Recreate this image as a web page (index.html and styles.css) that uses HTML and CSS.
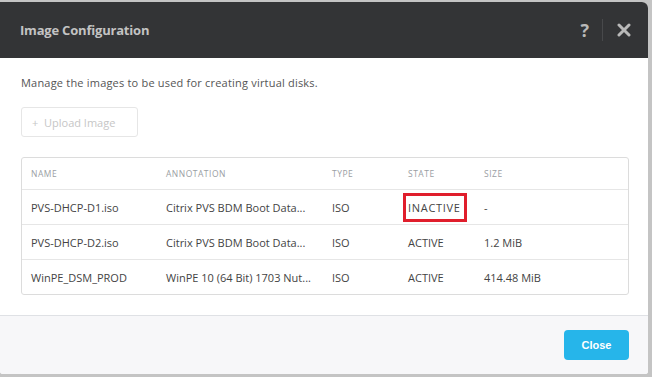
FILE: index.html
```html
<!DOCTYPE html>
<html lang="en">
<head>
    <meta charset="UTF-8">
    <title>Image Configuration</title>
    <link rel="stylesheet" href="styles.css">
</head>
<body>
    <div class="modal">
        <div class="modal-header">
            <h2>Image Configuration</h2>
            <div class="header-actions">
                <span class="help">?</span>
                <span class="divider"></span>
                <span class="close-x">
                    <svg width="14" height="14" viewBox="0 0 14 14">
                        <path d="M2 2 L12 12 M12 2 L2 12" stroke="#b9b9b9" stroke-width="3" stroke-linecap="round"/>
                    </svg>
                </span>
            </div>
        </div>

        <div class="modal-body">
            <p class="intro">Manage the images to be used for creating virtual disks.</p>
            <button class="upload" disabled>+&nbsp; Upload Image</button>

            <table class="images">
                <thead>
                    <tr>
                        <th class="c-name">Name</th>
                        <th class="c-ann">Annotation</th>
                        <th class="c-type">Type</th>
                        <th class="c-state">State</th>
                        <th>Size</th>
                    </tr>
                </thead>
                <tbody>
                    <tr>
                        <td>PVS-DHCP-D1.iso</td>
                        <td>Citrix PVS BDM Boot Data...</td>
                        <td>ISO</td>
                        <td><span class="highlight">INACTIVE</span></td>
                        <td>-</td>
                    </tr>
                    <tr>
                        <td>PVS-DHCP-D2.iso</td>
                        <td>Citrix PVS BDM Boot Data...</td>
                        <td>ISO</td>
                        <td>ACTIVE</td>
                        <td>1.2 MiB</td>
                    </tr>
                    <tr>
                        <td>WinPE_DSM_PROD</td>
                        <td>WinPE 10 (64 Bit) 1703 Nut...</td>
                        <td>ISO</td>
                        <td>ACTIVE</td>
                        <td>414.48 MiB</td>
                    </tr>
                </tbody>
            </table>
        </div>

        <div class="modal-footer">
            <button class="btn-close">Close</button>
        </div>
    </div>
</body>
</html>
```

FILE: styles.css
```css
body {
    margin: 0;
    background: #c4c4c4;
    font-family: "Open Sans", "Liberation Sans", sans-serif;
    width: 652px;
    height: 377px;
    overflow: hidden;
}
.modal {
    margin-top: 2px;
    width: 648px;
    height: 372px;
    background: #fff;
    border-radius: 0 6px 3px 3px;
    overflow: hidden;
    display: flex;
    flex-direction: column;
}
.modal-header {
    height: 56px;
    background: #333436;
    display: flex;
    align-items: center;
    justify-content: space-between;
    padding: 0 17px 0 20px;
    flex-shrink: 0;
}
.modal-header h2 {
    margin: 0;
    font-size: 13px;
    font-weight: 700;
    color: #c3c3c3;
    letter-spacing: -0.2px;
}
.header-actions {
    display: flex;
    align-items: center;
}
.help {
    color: #b9b9b9;
    font-weight: 700;
    font-size: 18px;
    margin-right: 13px;
}
.divider {
    width: 1px;
    height: 22px;
    background: #48494b;
    margin-right: 14px;
}
.close-x {
    display: flex;
}
.modal-body {
    flex: 1;
    padding: 17px 20px 20px 21px;
    border-bottom: 1px solid #dfe1e5;
}
.intro {
    margin: 0 0 17px;
    font-size: 11px;
    color: #555;
    letter-spacing: 0.2px;
}
.upload {
    font-family: inherit;
    font-size: 11px;
    color: #c6c6c6;
    background: #fff;
    border: 1px solid #e6e6e6;
    border-radius: 3px;
    padding: 0 10px;
    height: 30px;
    width: 117px;
    text-align: left;
}
.images {
    margin-top: 20px;
    width: 608px;
    border: 1px solid #dcdcdc;
    border-radius: 3px;
    border-collapse: separate;
    border-spacing: 0;
    font-size: 11px;
    color: #444;
}
.images th {
    text-align: left;
    font-weight: 400;
    font-size: 8.5px;
    letter-spacing: 0.5px;
    color: #9a9ea3;
    text-transform: uppercase;
    height: 31px;
    padding: 0 0 0 9px;
    border-bottom: 1px solid #e6e6e6;
}
.images td {
    height: 34px;
    padding: 0 0 0 9px;
    border-bottom: 1px solid #e6e6e6;
    white-space: nowrap;
}
.images tbody tr:last-child td {
    border-bottom: none;
}
.c-name { width: 126px; }
.c-ann { width: 157px; }
.c-type { width: 67px; }
.c-state { width: 67px; }
.highlight {
    display: inline-block;
    margin-left: -5px;
    padding: 4px 3px 4px 2px;
    border: 3px solid #e01e2c;
    letter-spacing: 0.7px;
}
.modal-footer {
    height: 58px;
    background: #f7f7f9;
    display: flex;
    align-items: center;
    justify-content: flex-end;
    padding-right: 19px;
}
.btn-close {
    font-family: "Liberation Sans", sans-serif;
    font-weight: 700;
    font-size: 11px;
    color: #fff;
    background: #26b5ea;
    border: none;
    border-radius: 4px;
    width: 65px;
    height: 30px;
}
```
